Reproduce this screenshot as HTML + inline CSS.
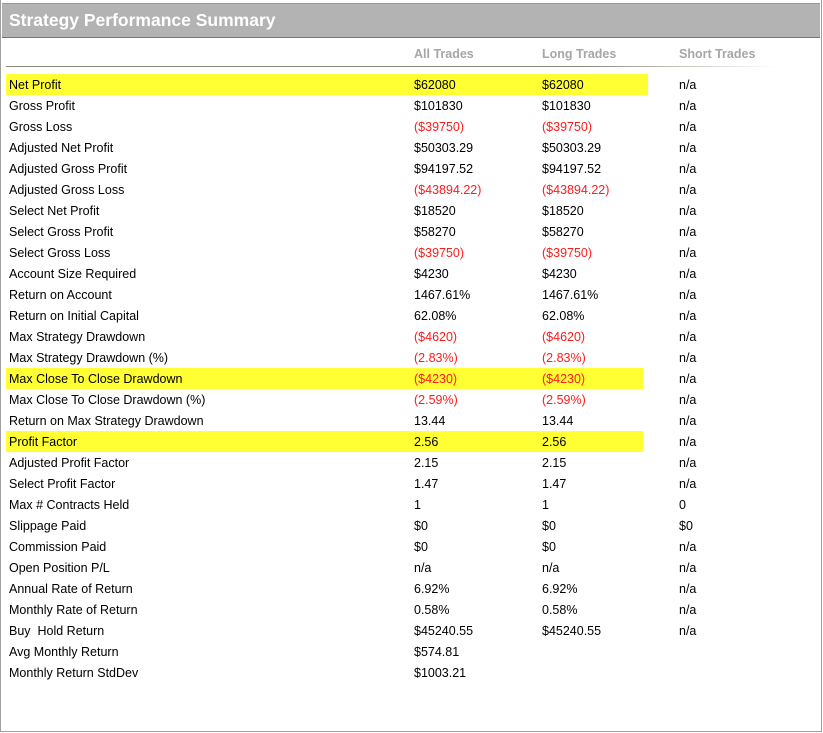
<!DOCTYPE html>
<html><head><style>
body{margin:0;width:823px;height:733px;background:#fff;font-family:"Liberation Sans","DejaVu Sans",sans-serif;overflow:hidden}
.frame{position:absolute;left:0;top:0;width:820px;height:731px;border:1px solid #a0a0a0;border-top:none}
.hdr{position:absolute;left:2px;top:3px;width:818px;height:33px;background:#b3b3b3;border-bottom:1px solid #777;border-top:1px solid #999}
.hdr span{position:absolute;left:7px;top:6px;color:#fff;font-weight:bold;font-size:17.5px}
.ch{position:absolute;top:47px;color:#a6a6a6;font-weight:bold;font-size:12.5px}
.line{position:absolute;left:6px;top:66px;width:770px;height:1px;background:linear-gradient(to right,#8a8a7a 75%,#fff)}
.row{position:absolute;left:0;height:21px;width:820px;font-size:12.5px;color:#000}
.row div{position:absolute;top:4px}
.hl{position:absolute;left:6px;top:0;height:21px;background:#ffff33}
.r{color:#ff1a1a}
</style></head><body>
<div class="frame"></div>
<div class="hdr"><span>Strategy Performance Summary</span></div>
<div class="ch" style="left:414px">All Trades</div>
<div class="ch" style="left:542px">Long Trades</div>
<div class="ch" style="left:679px">Short Trades</div>
<div class="line"></div>
<div id="rows"></div>
<script>
const d=[
["Net Profit","$62080","$62080","n/a",648],
["Gross Profit","$101830","$101830","n/a"],
["Gross Loss","($39750)","($39750)","n/a"],
["Adjusted Net Profit","$50303.29","$50303.29","n/a"],
["Adjusted Gross Profit","$94197.52","$94197.52","n/a"],
["Adjusted Gross Loss","($43894.22)","($43894.22)","n/a"],
["Select Net Profit","$18520","$18520","n/a"],
["Select Gross Profit","$58270","$58270","n/a"],
["Select Gross Loss","($39750)","($39750)","n/a"],
["Account Size Required","$4230","$4230","n/a"],
["Return on Account","1467.61%","1467.61%","n/a"],
["Return on Initial Capital","62.08%","62.08%","n/a"],
["Max Strategy Drawdown","($4620)","($4620)","n/a"],
["Max Strategy Drawdown (%)","(2.83%)","(2.83%)","n/a"],
["Max Close To Close Drawdown","($4230)","($4230)","n/a",643],
["Max Close To Close Drawdown (%)","(2.59%)","(2.59%)","n/a"],
["Return on Max Strategy Drawdown","13.44","13.44","n/a"],
["Profit Factor","2.56","2.56","n/a",643],
["Adjusted Profit Factor","2.15","2.15","n/a"],
["Select Profit Factor","1.47","1.47","n/a"],
["Max # Contracts Held","1","1","0"],
["Slippage Paid","$0","$0","$0"],
["Commission Paid","$0","$0","n/a"],
["Open Position P/L","n/a","n/a","n/a"],
["Annual Rate of Return","6.92%","6.92%","n/a"],
["Monthly Rate of Return","0.58%","0.58%","n/a"],
["Buy  Hold Return","$45240.55","$45240.55","n/a"],
["Avg Monthly Return","$574.81","",""],
["Monthly Return StdDev","$1003.21","",""]];
let h="";
d.forEach((r,i)=>{
 const c=v=>v.startsWith("(")?' class="r"':'';
 h+=`<div class="row" style="top:${74+i*21}px">${r[4]?`<span class="hl" style="width:${r[4]-6}px"></span>`:''}<div style="left:9px;white-space:pre">${r[0]}</div><div${c(r[1])} style="left:414px">${r[1]}</div><div${c(r[2])} style="left:542px">${r[2]}</div><div style="left:679px">${r[3]}</div></div>`;
});
document.getElementById("rows").innerHTML=h;
</script>
</body></html>
